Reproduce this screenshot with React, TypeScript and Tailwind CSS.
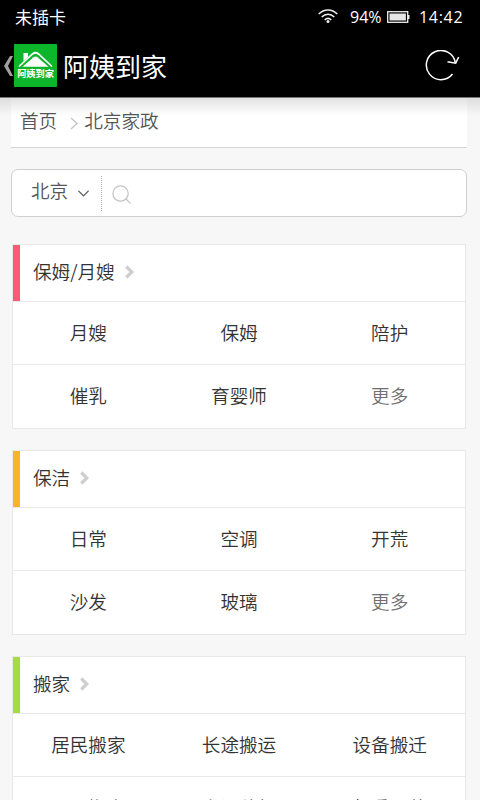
import { ChevronDown, ChevronRight, Search } from "lucide-react";

type Category = {
  title: string;
  accent: string;
  rows: string[][];
};

const categories: Category[] = [
  {
    title: "保姆/月嫂",
    accent: "bg-[#ff5a75]",
    rows: [
      ["月嫂", "保姆", "陪护"],
      ["催乳", "育婴师", "更多"],
    ],
  },
  {
    title: "保洁",
    accent: "bg-[#fbb428]",
    rows: [
      ["日常", "空调", "开荒"],
      ["沙发", "玻璃", "更多"],
    ],
  },
  {
    title: "搬家",
    accent: "bg-[#a5dc46]",
    rows: [
      ["居民搬家", "长途搬运", "设备搬迁"],
      ["公司搬家", "空调移机", "起重吊装"],
    ],
  },
];

function StatusBar() {
  return (
    <div className="flex h-[34px] items-center justify-between pr-[16px] pl-[15px]">
      <span className="-mt-[2px] text-[17px] leading-none font-normal">未插卡</span>
      <div className="flex items-center font-['Open_Sans','Noto_Sans',sans-serif] text-[16px] leading-none font-medium">
        <svg width="20" height="15" viewBox="0 0 20 15" fill="none" stroke="#eee" strokeWidth="1.5" className="mr-[12px] -mt-[2px]">
          <path d="M.7 5C6-.5 14-.5 19.3 5M3.7 8c3.700-3.700 8.900-3.700 12.600 0M6.700 11c2-2 4.600-2 6.600 0" />
          <circle cx="10" cy="12.600" r="1.500" fill="#eee" stroke="none" />
        </svg>
        <span className="w-[34px]">94%</span>
        <svg width="24" height="12" viewBox="0 0 24 12" className="mr-[8px] ml-[3px]">
          <rect x=".7" y=".7" width="20" height="10.600" fill="none" stroke="#eee" strokeWidth="1.300" />
          <rect x="2.500" y="2.500" width="16.400" height="7" fill="#e6e6e6" />
          <path d="M21.500 4v4" stroke="#eee" strokeWidth="2" />
        </svg>
        <span className="w-[45px] tracking-[0.7px]">14:42</span>
      </div>
    </div>
  );
}

function AppLogo() {
  return (
    <div className="flex h-[43px] w-[43px] flex-col items-center rounded-[1px] bg-[#0db52b] pt-[7px]">
      <svg width="35" height="17" viewBox="0 0 35 17" fill="none">
        <path d="M5.500 10V2H10v4" fill="#fff" />
        <path d="M1 15.500 14.500 3q3-2.500 6 0L34 15.500" stroke="#fff" strokeWidth="1.700" />
        <path d="M4.500 15.800 15.500 6.300q2-1.500 4 0l11 9.500z" fill="#fff" />
      </svg>
      <span className="text-[9.200px] leading-[11px] font-bold whitespace-nowrap">阿姨到家</span>
    </div>
  );
}

function TitleBar() {
  return (
    <div className="flex h-[63px] items-center pr-[20px] pl-[4px]">
      <svg width="10" height="20" viewBox="0 0 10 20" fill="#a0a0a0">
        <path d="M6 0h3L4 10l5 10H6L0 10z" />
      </svg>
      <AppLogo />
      <h1 className="ml-[6px] flex-1 text-[26px] leading-none font-normal">阿姨到家</h1>
      <svg width="35" height="32" viewBox="0 0 35 32" fill="none" stroke="#fff" strokeWidth="1.500">
        <path d="M27.500 24A14.600 14.600 0 1 1 30.300 12.500" />
        <path d="M22.500 11.800 30.700 13.200l3-6.200" />
      </svg>
    </div>
  );
}

function Breadcrumb() {
  return (
    <nav className="mx-[11px] flex h-[50px] w-[456px] items-start border-b border-[#d4d4d4] bg-linear-to-b from-[#e2e2e2] via-[#fbfbfb] via-30% to-white to-40% pt-[8px] pl-[9px] text-[18.600px] leading-[28px] text-[#555]">
      <span>首页</span>
      <svg width="8" height="13" viewBox="0 0 8 13" fill="none" stroke="#c4c4c4" strokeWidth="1.300" className="mt-[11px] mr-[6px] ml-[13px]">
        <path d="m1 1 6 5.500L1 12" />
      </svg>
      <span>北京家政</span>
    </nav>
  );
}

function SearchBox() {
  return (
    <div className="mx-[11px] mt-[21px] flex h-[48px] w-[456px] items-center rounded-[7px] border-[1.500px] border-[#cfcfcf] bg-white pl-[19px] text-[#555]">
      <span className="-mt-[6px] text-[18.600px] leading-[28px]">北京</span>
      <ChevronDown size={19} strokeWidth={1.6} className="ml-[6px]" />
      <div className="ml-[8px] h-[35px] border-l-[1px] border-dotted border-[#aaa]" />
      <Search size={23} strokeWidth={1.3} className="mt-[3px] ml-[8px] text-[#c4c4c4]" />
    </div>
  );
}

function CategoryCard({ title, accent, rows }: Category) {
  return (
    <section className="h-[185px] border border-[#e8e8e8] bg-white text-[18.600px] leading-[28px] text-[#333]">
      <div className="flex h-[56px] items-center">
        <div className={`h-full w-[7px] ${accent}`} />
        <h2 className="-mt-[5px] ml-[13px]">{title}</h2>
        <ChevronRight
          size={22}
          strokeWidth={3.6}
          strokeLinecap="butt"
          strokeLinejoin="miter"
          className="-mt-[2px] ml-[3px] text-[#cfcfcf]"
        />
      </div>
      {rows.map((row) => (
        <div key={row[0]} className="grid h-[63px] grid-cols-3 items-center border-t border-[#e8e8e8] pb-[2px] text-center">
          {row.map((name) => (
            <span key={name} className={name === "更多" ? "text-[#707070]" : undefined}>
              {name}
            </span>
          ))}
        </div>
      ))}
    </section>
  );
}

export default function App() {
  return (
    <main className="h-[800px] w-[480px] overflow-hidden bg-[#f7f7f7] font-['Noto_Sans_CJK_SC',sans-serif] font-[350]">
      <header className="h-[98px] border-b border-[#777] bg-black text-white">
        <StatusBar />
        <TitleBar />
      </header>
      <div className="bg-linear-to-b from-[#dedede] to-[#f7f7f7] to-[18px]">
        <Breadcrumb />
      </div>
      <SearchBox />
      <div className="mt-[27px] ml-[12px] flex w-[454px] flex-col gap-[21px]">
        {categories.map((category) => (
          <CategoryCard key={category.title} {...category} />
        ))}
      </div>
    </main>
  );
}
